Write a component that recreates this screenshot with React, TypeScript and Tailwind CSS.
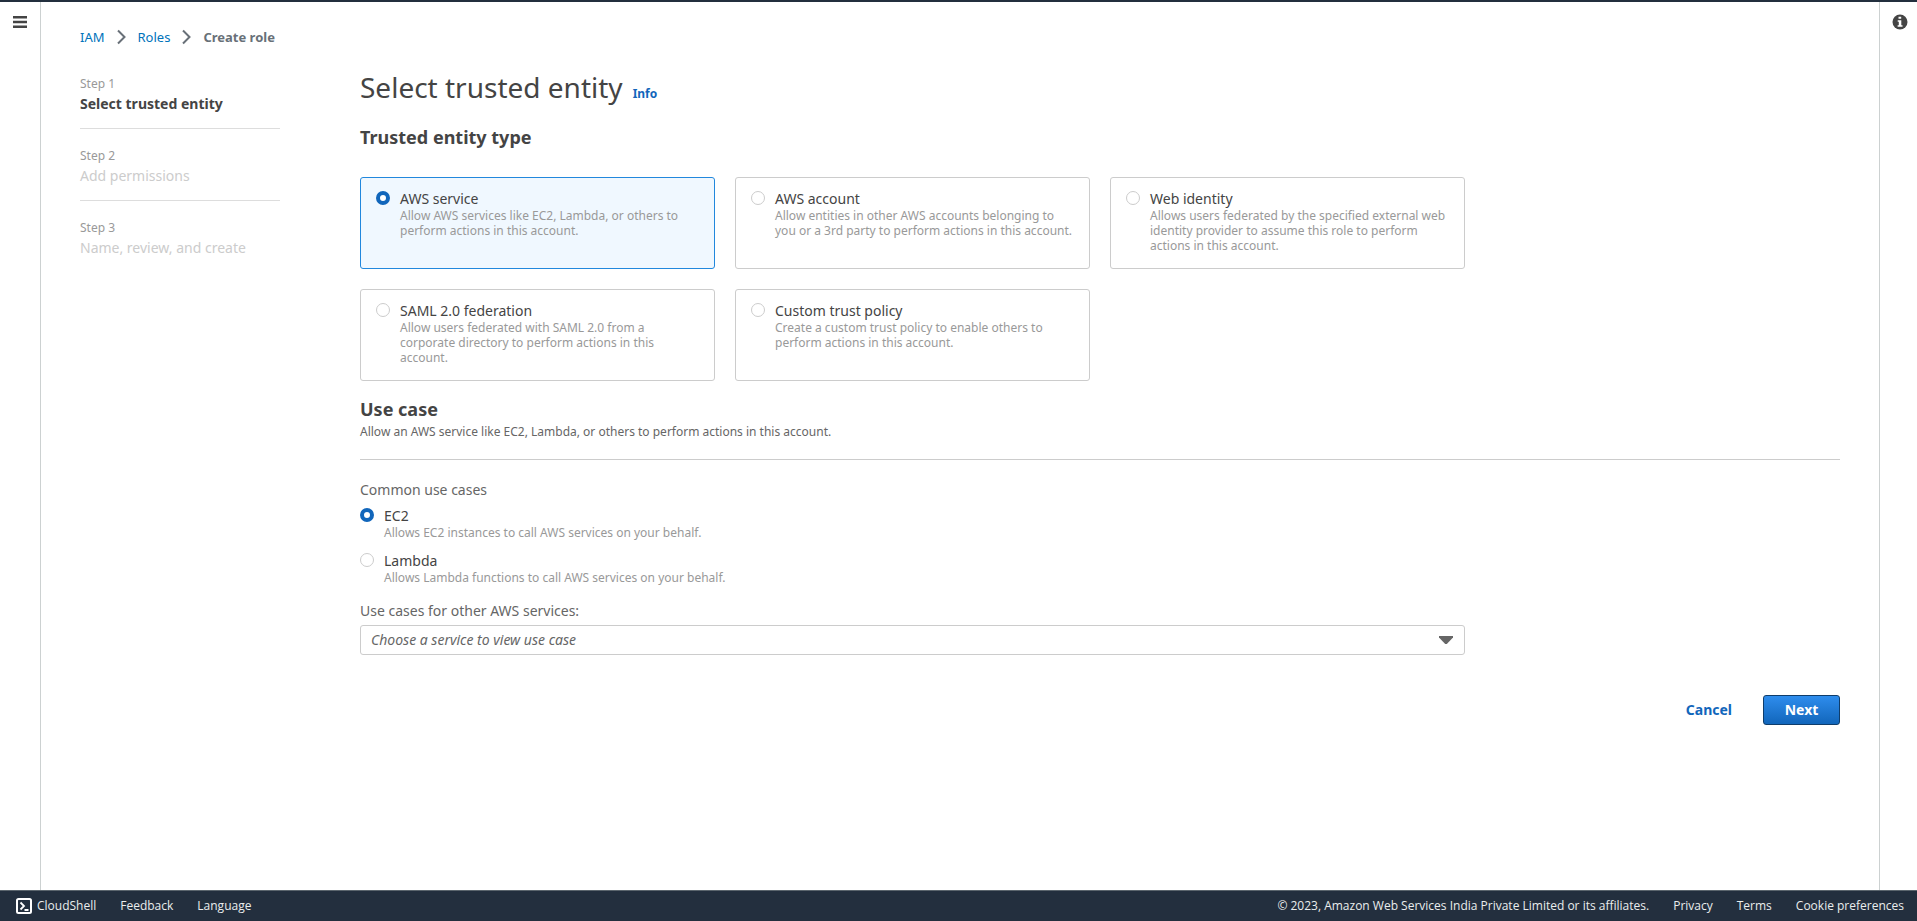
import { useState } from "react";

type Option = { id: string; title: string; text: string };

const steps = [
  { label: "Step 1", title: "Select trusted entity", active: true },
  { label: "Step 2", title: "Add permissions", active: false },
  { label: "Step 3", title: "Name, review, and create", active: false },
];

const entityTypes: Option[] = [
  {
    id: "aws-service",
    title: "AWS service",
    text: "Allow AWS services like EC2, Lambda, or others to perform actions in this account.",
  },
  {
    id: "aws-account",
    title: "AWS account",
    text: "Allow entities in other AWS accounts belonging to you or a 3rd party to perform actions in this account.",
  },
  {
    id: "web-identity",
    title: "Web identity",
    text: "Allows users federated by the specified external web identity provider to assume this role to perform actions in this account.",
  },
  {
    id: "saml",
    title: "SAML 2.0 federation",
    text: "Allow users federated with SAML 2.0 from a corporate directory to perform actions in this account.",
  },
  {
    id: "custom",
    title: "Custom trust policy",
    text: "Create a custom trust policy to enable others to perform actions in this account.",
  },
];

const useCases: Option[] = [
  { id: "ec2", title: "EC2", text: "Allows EC2 instances to call AWS services on your behalf." },
  { id: "lambda", title: "Lambda", text: "Allows Lambda functions to call AWS services on your behalf." },
];

function Chevron() {
  return (
    <svg width="9" height="16" viewBox="0 0 9 16" fill="none" stroke="#687078" strokeWidth="2" aria-hidden="true">
      <path d="M1 1.5 L7.5 8 L1 14.5" />
    </svg>
  );
}

function Radio({
  option,
  name,
  checked,
  onSelect,
}: {
  option: Option;
  name: string;
  checked: boolean;
  onSelect: (id: string) => void;
}) {
  return (
    <>
      <input
        type="radio"
        id={option.id}
        name={name}
        checked={checked}
        onChange={() => onSelect(option.id)}
        className="mt-px size-3.5 shrink-0 appearance-none rounded-full border border-[#ccc] bg-white checked:border-4 checked:border-[#1166bb]"
      />
      <span className="block">
        <span className="block text-sm leading-[18px] text-[#444]">{option.title}</span>
        <span className="block text-xs leading-[15px] text-[#999]">{option.text}</span>
      </span>
    </>
  );
}

export default function App() {
  const [entity, setEntity] = useState("aws-service");
  const [useCase, setUseCase] = useState("ec2");

  return (
    <div className="flex min-h-screen flex-col border-t-2 border-[#232f3e] bg-white font-['Noto_Sans',sans-serif] text-sm text-[#444]">
      <div className="flex flex-1">
        <nav className="w-[41px] shrink-0 border-r border-[#ccd1d1]">
          <button type="button" aria-label="Open navigation" className="ml-[13px] mt-3.5 block">
            <svg width="14" height="12" viewBox="0 0 14 12" fill="#444" aria-hidden="true">
              <path d="M0 0h14v2.5H0zM0 4.8h14v2.4H0zM0 9.5h14v2.5H0z" />
            </svg>
          </button>
        </nav>

        <div className="flex-1 px-[39px] pt-[25px]">
          <nav aria-label="Breadcrumb" className="flex h-5 items-center gap-3 text-[13px] text-[#0073bb]">
            <a href="#iam">IAM</a>
            <Chevron />
            <a href="#roles">Roles</a>
            <Chevron />
            <span className="font-bold text-[#687078]">Create role</span>
          </nav>

          <div className="mt-[22px] flex gap-20">
            <ol className="mt-[7px] w-[200px] shrink-0">
              {steps.map((step) => (
                <li
                  key={step.label}
                  className="mb-[19px] border-b border-[#ddd] pb-3.5 last:border-b-0"
                >
                  <div className="text-xs leading-4 text-[#999]">{step.label}</div>
                  <div
                    className={
                      step.active
                        ? "mt-0.5 text-sm leading-5 font-bold text-[#444]"
                        : "mt-0.5 text-sm leading-5 text-[#ccc]"
                    }
                  >
                    {step.title}
                  </div>
                </li>
              ))}
            </ol>

            <main className="flex-1">
              <div className="flex items-baseline gap-2.5">
                <h1 className="text-[28px] leading-9">Select trusted entity</h1>
                <a href="#info" className="text-xs font-bold text-[#1166bb]">
                  Info
                </a>
              </div>

              <h2 className="mt-5 text-lg leading-6 font-bold">Trusted entity type</h2>
              <div className="mt-7 grid w-3/4 grid-cols-3 gap-5 pr-[5px]">
                {entityTypes.map((option) => (
                  <label
                    key={option.id}
                    htmlFor={option.id}
                    className="flex min-h-[92px] gap-2.5 rounded-[3px] border border-[#ccc] px-[15px] pt-3 pb-3 has-checked:border-[#2288dd] has-checked:bg-[#f0f8ff]"
                  >
                    <Radio option={option} name="entity" checked={entity === option.id} onSelect={setEntity} />
                  </label>
                ))}
              </div>

              <h2 className="mt-4 text-lg leading-6 font-bold">Use case</h2>
              <p className="mt-[3px] border-b border-[#ccc] pb-[19px] text-xs leading-4 text-[#666]">
                Allow an AWS service like EC2, Lambda, or others to perform actions in this account.
              </p>

              <fieldset className="mt-5">
                <legend className="text-sm leading-5 text-[#666]">Common use cases</legend>
                <div className="mt-[7px] flex flex-col gap-3">
                  {useCases.map((option) => (
                    <label key={option.id} htmlFor={option.id} className="flex gap-2.5">
                      <Radio option={option} name="usecase" checked={useCase === option.id} onSelect={setUseCase} />
                    </label>
                  ))}
                </div>
              </fieldset>

              <label htmlFor="other-services" className="mt-4 block text-sm leading-5 text-[#666]">
                Use cases for other AWS services:
              </label>
              <div className="mt-1 grid w-3/4 items-center pr-[5px]">
                <select
                  id="other-services"
                  defaultValue=""
                  className="col-start-1 row-start-1 h-[30px] w-full appearance-none rounded-[3px] border border-[#ccc] bg-white px-2.5 text-sm text-[#666] italic"
                >
                  <option value="">Choose a service to view use case</option>
                </select>
                <svg
                  width="14"
                  height="8"
                  viewBox="0 0 14 8"
                  fill="#666"
                  aria-hidden="true"
                  className="pointer-events-none col-start-1 row-start-1 mr-3 justify-self-end"
                >
                  <path d="M0 0h14v1.5L7.8 8H6.2L0 1.5z" />
                </svg>
              </div>

              <div className="mt-10 flex items-center justify-end gap-[31px]">
                <button type="button" className="font-bold text-[#1166bb]">
                  Cancel
                </button>
                <button
                  type="button"
                  className="h-[30px] min-w-[77px] rounded-[3px] border border-[#0f3d6b] bg-linear-to-b from-[#2e8ded] to-[#1166bb] px-5 font-bold text-white"
                >
                  Next
                </button>
              </div>
            </main>
          </div>
        </div>

        <aside className="w-[38px] shrink-0 border-l border-[#ccd1d1]">
          <button type="button" aria-label="Info" className="ml-3 mt-3 block">
            <svg width="16" height="16" viewBox="0 0 16 16" aria-hidden="true">
              <circle cx="8" cy="8" r="7.5" fill="#444" />
              <path d="M6.5 2.8h2.7v2H6.5zM5.7 6.2h3.6v5h1.2v1.6H5.6v-1.6h1.2V7.8H5.7z" fill="#fff" />
            </svg>
          </button>
        </aside>
      </div>

      <footer className="flex h-[31px] items-center justify-between border-t border-[#5b656d] bg-[#232f3e] pr-[13px] pl-4 font-['Open_Sans',sans-serif] text-xs text-[#eaeded]">
        <div className="flex items-center gap-6">
          <button type="button" className="flex items-center gap-[5px]">
            <svg width="16" height="16" viewBox="0 0 16 16" fill="none" stroke="#fff" strokeWidth="2" aria-hidden="true">
              <rect x="1" y="1" width="14" height="14" rx="1.5" />
              <path d="M4.5 4.5 L8 8 L4.5 11.5M8.5 12h4" strokeWidth="1.8" />
            </svg>
            CloudShell
          </button>
          <button type="button">Feedback</button>
          <button type="button">Language</button>
        </div>
        <div className="flex items-center gap-6">
          <span>© 2023, Amazon Web Services India Private Limited or its affiliates.</span>
          <a href="#privacy">Privacy</a>
          <a href="#terms">Terms</a>
          <a href="#cookies">Cookie preferences</a>
        </div>
      </footer>
    </div>
  );
}
